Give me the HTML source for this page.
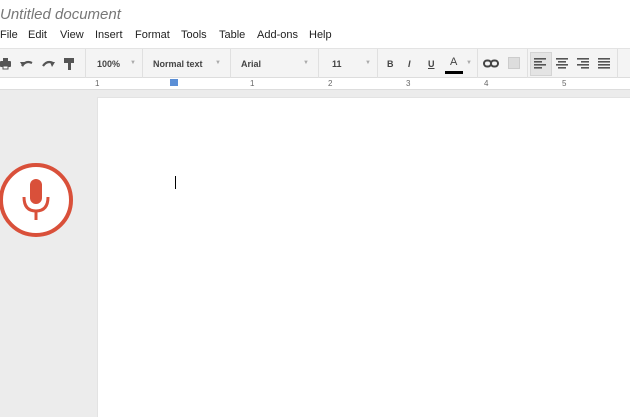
<!DOCTYPE html>
<html><head><style>
*{margin:0;padding:0;box-sizing:border-box}
body{width:630px;height:416px;overflow:hidden;background:#ececec;font-family:"Liberation Sans",sans-serif;position:relative}
.top{position:absolute;left:0;top:0;width:630px;height:48px;background:#fff}
.title{position:absolute;left:0;top:6px;font-size:15px;font-style:italic;color:#777}
.menu{position:absolute;top:29px;left:0;font-size:11px;color:#222}
.menu span{position:absolute;white-space:nowrap}
.tb{position:absolute;top:48px;left:0;width:630px;height:30px;background:#f4f4f4;border-top:1px solid #e3e3e3;border-bottom:1px solid #ddd}
.tb span{position:absolute;top:10px;font-size:9px;color:#444;font-weight:bold}
.sep{position:absolute;top:0;width:1px;height:30px;background:#e0e0e0}
.tb span.dd{font-size:6px;color:#aaa;top:11px;font-weight:normal}
.ruler{position:absolute;top:78px;left:0;width:630px;height:12px;background:#fff;border-bottom:1px solid #ddd}
.ruler span{position:absolute;top:1px;font-size:8px;color:#666}
.page{position:absolute;left:97px;top:97px;width:533px;height:320px;background:#fff;border-left:1px solid #e3e3e3;border-top:1px solid #e3e3e3}
.cur{position:absolute;left:175px;top:176px;width:1px;height:13px;background:#000}
</style></head><body>
<div class="top"></div>
<div class="title">Untitled document</div>
<div class="menu">
<span style="left:0">File</span><span style="left:28px">Edit</span><span style="left:60px">View</span><span style="left:95px">Insert</span><span style="left:135px">Format</span><span style="left:181px">Tools</span><span style="left:219px">Table</span><span style="left:257px">Add-ons</span><span style="left:309px">Help</span>
</div>
<div class="tb">
<svg style="position:absolute;left:0;top:8px" width="80" height="14" viewBox="0 0 80 14" fill="#555">
<rect x="0" y="4" width="11" height="6" rx="1"/><rect x="3" y="1" width="5" height="3"/><rect x="3" y="9" width="5" height="3" fill="#fff" stroke="#555"/>
<path d="M22 9 Q26 3 32 6" stroke="#555" stroke-width="2.2" fill="none"/><path d="M20 5 L23 10 L25 5Z"/>
<path d="M53 6 Q47 3 43 9" stroke="#555" stroke-width="2.2" fill="none"/><path d="M55 5 L52 10 L50 5Z"/>
<rect x="64" y="1" width="10" height="5"/><rect x="68" y="6" width="3" height="7"/>
</svg>
<div class="sep" style="left:85px"></div>
<span style="left:97px">100%</span><span class="dd" style="left:130px">▼</span>
<div class="sep" style="left:142px"></div>
<span style="left:153px">Normal text</span><span class="dd" style="left:215px">▼</span>
<div class="sep" style="left:230px"></div>
<span style="left:241px">Arial</span><span class="dd" style="left:303px">▼</span>
<div class="sep" style="left:318px"></div>
<span style="left:332px">11</span><span class="dd" style="left:365px">▼</span>
<div class="sep" style="left:377px"></div>
<span style="left:387px">B</span><span style="left:408px;font-style:italic">I</span><span style="left:428px;text-decoration:underline">U</span><span style="left:450px;font-size:11px;top:7px;font-weight:normal">A</span>
<div style="position:absolute;left:445px;top:22px;width:18px;height:3px;background:#000"></div><span class="dd" style="left:466px">▼</span>
<div class="sep" style="left:477px"></div>
<svg style="position:absolute;left:483px;top:10px" width="16" height="9"><rect x="1" y="1.5" width="7" height="6" rx="3" fill="none" stroke="#444" stroke-width="2"/><rect x="8" y="1.5" width="7" height="6" rx="3" fill="none" stroke="#444" stroke-width="2"/></svg>
<div style="position:absolute;left:508px;top:8px;width:12px;height:12px;background:#ddd;border:1px solid #ccc"></div>
<div class="sep" style="left:527px"></div>
<div style="position:absolute;left:530px;top:3px;width:22px;height:24px;background:#e4e4e4;border:1px solid #d4d4d4"></div>
<svg style="position:absolute;left:534px;top:9px" width="80" height="12" fill="#555">
<rect x="0" y="0" width="12" height="1.6"/><rect x="0" y="3" width="8" height="1.6"/><rect x="0" y="6" width="12" height="1.6"/><rect x="0" y="9" width="8" height="1.6"/>
<rect x="22" y="0" width="12" height="1.6"/><rect x="24" y="3" width="8" height="1.6"/><rect x="22" y="6" width="12" height="1.6"/><rect x="24" y="9" width="8" height="1.6"/>
<rect x="43" y="0" width="12" height="1.6"/><rect x="47" y="3" width="8" height="1.6"/><rect x="43" y="6" width="12" height="1.6"/><rect x="47" y="9" width="8" height="1.6"/>
<rect x="64" y="0" width="12" height="1.6"/><rect x="64" y="3" width="12" height="1.6"/><rect x="64" y="6" width="12" height="1.6"/><rect x="64" y="9" width="12" height="1.6"/>
</svg>
<div class="sep" style="left:617px"></div>
</div>
<div class="ruler">
<span style="left:95px">1</span><span style="left:250px">1</span><span style="left:328px">2</span><span style="left:406px">3</span><span style="left:484px">4</span><span style="left:562px">5</span>
<div style="position:absolute;left:170px;top:1px;width:8px;height:7px;background:#5b8fd6"></div>
</div>
<div class="page"></div>
<div class="cur"></div>
<svg style="position:absolute;left:-2px;top:161px" width="80" height="80" viewBox="0 0 80 80">
<circle cx="38" cy="39" r="35" fill="#fff" stroke="#d9503a" stroke-width="4"/>
<rect x="32" y="18" width="12" height="25" rx="6" fill="#d9503a"/>
<path d="M26 36 Q26 50 38 50 Q50 50 50 36" fill="none" stroke="#d9503a" stroke-width="3"/>
<rect x="36.5" y="50" width="3" height="9" fill="#d9503a"/>
</svg>
</body></html>
